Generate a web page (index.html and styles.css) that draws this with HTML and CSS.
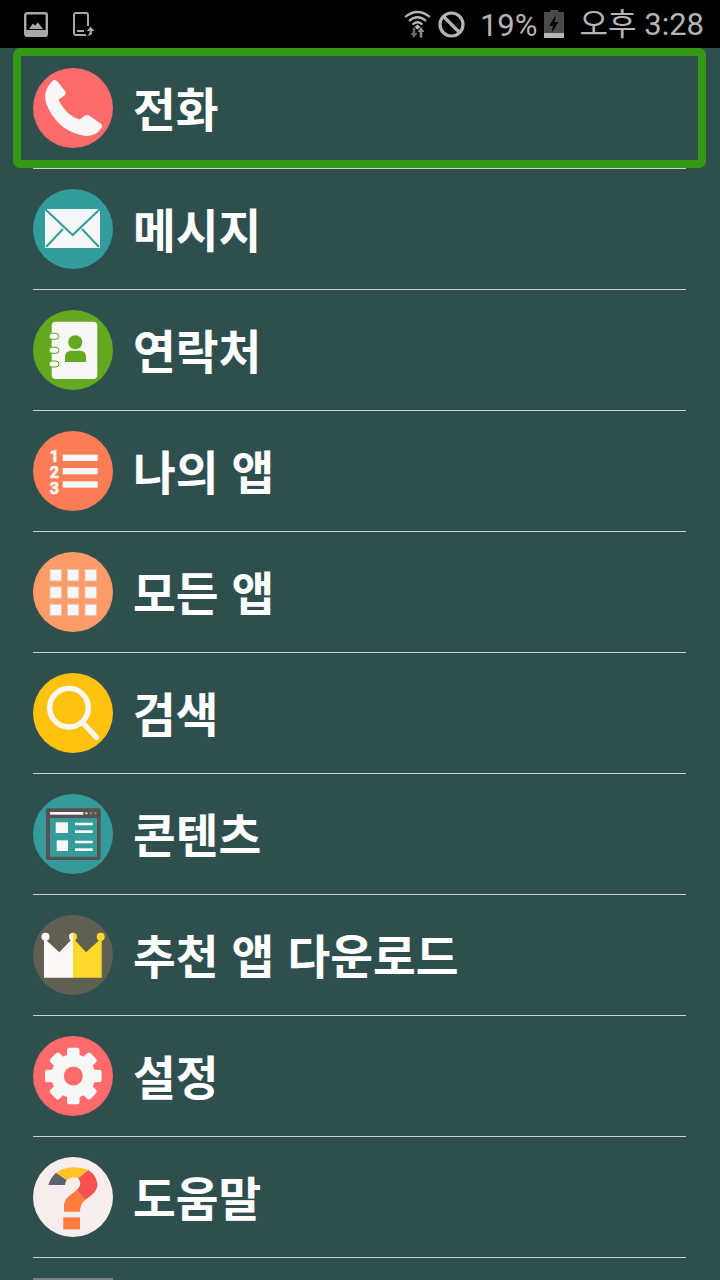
FILE: index.html
```html
<!DOCTYPE html>
<html lang="ko">
<head>
    <meta charset="UTF-8">
    <meta name="viewport" content="width=device-width, initial-scale=1.0">
    <title>메뉴</title>
    <link rel="stylesheet" href="styles.css">
</head>
<body>

    <!-- Status Bar -->
    <div class="status-bar">
        <div class="status-left">
            <svg class="status-gallery" viewBox="0 0 24 25">
                <rect x="1.2" y="1.2" width="21.6" height="22.6" rx="2" fill="none" stroke="#a8a8a8" stroke-width="2.4"/>
                <rect x="1" y="18" width="22" height="6.5" fill="#a8a8a8"/>
                <path d="M5 17 L9 11.5 L11 13.5 L14 10.5 L19 17 Z" fill="#a8a8a8"/>
            </svg>
            <svg class="status-device" viewBox="0 0 22 24">
                <rect x="1" y="1" width="14" height="22" rx="2" fill="none" stroke="#a8a8a8" stroke-width="2"/>
                <rect x="4" y="18" width="7" height="2" fill="#a8a8a8"/>
                <rect x="13" y="14" width="9" height="10" fill="#000"/>
                <path d="M17.5 14.5 L21.5 19 L19 19 L19 22 Q17 24 13.5 23.5 Q16.8 22.5 16.8 19 L14 19 Z" fill="#a8a8a8"/>
            </svg>
        </div>
        <div class="status-right">
            <svg class="status-wifi" viewBox="0 0 27 28">
                <path d="M1 7 Q13.5 -3 26 7" fill="none" stroke="#b5b5b5" stroke-width="2.2"/>
                <path d="M5 11 Q13.5 3.5 22 11" fill="none" stroke="#b5b5b5" stroke-width="2.2"/>
                <path d="M8.5 14.5 Q13.5 10 18.5 14.5" fill="none" stroke="#b5b5b5" stroke-width="2.2"/>
                <path d="M10.5 17 L13.5 14.5 L16.5 17 L13.5 19.5 Z" fill="#b5b5b5"/>
                <path d="M10 28 L6.5 23 L8.7 23 L8.7 18 L11.3 18 L11.3 23 L13.5 23 Z" fill="#6a6a6a"/>
                <path d="M17 17 L20.5 22 L18.3 22 L18.3 27.5 L15.7 27.5 L15.7 22 L13.5 22 Z" fill="#8c8c8c"/>
            </svg>
            <svg class="status-block" viewBox="0 0 27 27">
                <circle cx="13.5" cy="13.5" r="11.5" fill="none" stroke="#b5b5b5" stroke-width="3.2"/>
                <path d="M5.5 5.5 L21.5 21.5" stroke="#b5b5b5" stroke-width="3.2"/>
            </svg>
            <span class="status-battery-text">19%</span>
            <svg class="status-battery" viewBox="0 0 20 28">
                <rect x="6" y="0" width="8" height="3" fill="#4a4a4a"/>
                <rect x="0" y="2" width="20" height="21" fill="#4a4a4a"/>
                <rect x="0" y="23" width="20" height="5" fill="#b5b5b5"/>
                <path d="M12 5 L5 16 L9 16 L7.5 23 L14.5 12 L10.5 12 Z" fill="#000"/>
            </svg>
            <span class="status-time">오후 3:28</span>
        </div>
    </div>

    <!-- Menu List -->
    <div class="screen">
    <div class="menu">

        <div class="menu-row">
            <svg class="menu-icon" viewBox="0 0 80 80">
                <circle cx="40" cy="40" r="40" fill="#ff6b6b"/>
                <path d="M20 12.5 Q22.5 11 24.5 13.5 L32 23 Q33.5 25.5 31.5 27.5 L25.5 31.5 Q28 38 35 45 Q41 50 46.5 51.5 L52 47.5 Q54 46.5 56 47.5 L67.5 55.5 Q70 57.5 68.5 60 Q63 68 53 68 Q42 67 30 59 Q18 49 13.5 36 Q9 23 20 12.5 Z" fill="#f7f7f7"/>
            </svg>
            <span class="menu-label">전화</span>
            <div class="focus-ring"></div>
        </div>

        <div class="menu-row">
            <svg class="menu-icon" viewBox="0 0 80 80">
                <circle cx="40" cy="40" r="40" fill="#339d9d"/>
                <rect x="12" y="20" width="55" height="39" fill="#f7f7f7"/>
                <path d="M12 20 L39.7 46 L67 20 M13 58 L30 40 M66 58 L49 40" fill="none" stroke="#339d9d" stroke-width="2"/>
            </svg>
            <span class="menu-label">메시지</span>
        </div>

        <div class="menu-row">
            <svg class="menu-icon" viewBox="0 0 80 80">
                <circle cx="40" cy="40" r="40" fill="#63a91f"/>
                <rect x="18.7" y="11.7" width="45.6" height="57.3" rx="4" fill="#f7f7f7"/>
                <rect x="16" y="23.3" width="10" height="6" rx="3" fill="#f7f7f7" stroke="#63a91f" stroke-width="1"/>
                <rect x="16" y="37.3" width="10" height="6" rx="3" fill="#f7f7f7" stroke="#63a91f" stroke-width="1"/>
                <rect x="16" y="51" width="10" height="6" rx="3" fill="#f7f7f7" stroke="#63a91f" stroke-width="1"/>
                <circle cx="42.3" cy="32.3" r="7" fill="#63a91f"/>
                <path d="M32 52 L32 47 Q32 40.7 38 40.7 L47 40.7 Q53 40.7 53 47 L53 52 Z" fill="#63a91f"/>
            </svg>
            <span class="menu-label">연락처</span>
        </div>

        <div class="menu-row">
            <svg class="menu-icon" viewBox="0 0 80 80">
                <circle cx="40" cy="40" r="40" fill="#fc7d55"/>
                <text class="list-num"><tspan x="21.3" y="30.5">1</tspan><tspan x="21.3" y="46.5">2</tspan><tspan x="21.3" y="62.7">3</tspan></text>
                <rect x="29.7" y="23.7" width="35" height="6.3" fill="#f7f7f7"/>
                <rect x="29.7" y="37" width="35" height="6.3" fill="#f7f7f7"/>
                <rect x="29.7" y="50.3" width="35" height="6.4" fill="#f7f7f7"/>
            </svg>
            <span class="menu-label">나의 앱</span>
        </div>

        <div class="menu-row">
            <svg class="menu-icon" viewBox="0 0 80 80">
                <circle cx="40" cy="40" r="40" fill="#ff9b66"/>
                <g fill="#f7f7f7" stroke="#e0c6b4" stroke-width="1">
                    <rect x="17" y="17.5" width="11.4" height="11.4"/>
                    <rect x="34.4" y="17.5" width="11.4" height="11.4"/>
                    <rect x="52" y="17.5" width="11.4" height="11.4"/>
                    <rect x="17" y="34.8" width="11.4" height="11.4"/>
                    <rect x="34.4" y="34.8" width="11.4" height="11.4"/>
                    <rect x="52" y="34.8" width="11.4" height="11.4"/>
                    <rect x="17" y="52.2" width="11.4" height="11.4"/>
                    <rect x="34.4" y="52.2" width="11.4" height="11.4"/>
                    <rect x="52" y="52.2" width="11.4" height="11.4"/>
                </g>
            </svg>
            <span class="menu-label">모든 앱</span>
        </div>

        <div class="menu-row">
            <svg class="menu-icon" viewBox="0 0 80 80">
                <circle cx="40" cy="40" r="40" fill="#ffc30f"/>
                <circle cx="36" cy="34.7" r="19.3" fill="none" stroke="#f7f7f7" stroke-width="5.4"/>
                <path d="M50.5 50.5 L63.5 64.5" stroke="#f7f7f7" stroke-width="5.4" stroke-linecap="round"/>
            </svg>
            <span class="menu-label">검색</span>
        </div>

        <div class="menu-row">
            <svg class="menu-icon" viewBox="0 0 80 80">
                <circle cx="40" cy="40" r="40" fill="#339b99"/>
                <rect x="13" y="14.3" width="54.7" height="51.7" rx="2" fill="#555152"/>
                <rect x="17" y="18" width="33.3" height="2.7" fill="#f7f7f7"/>
                <circle cx="53.3" cy="19.3" r="1.3" fill="#f2c14e"/>
                <circle cx="58" cy="19.3" r="1.3" fill="#3fb58f"/>
                <circle cx="62.3" cy="19.3" r="1.3" fill="#e8554e"/>
                <rect x="17" y="24" width="47" height="38.7" fill="#339b99"/>
                <rect x="22.7" y="28.3" width="12.3" height="10.7" fill="#f7f7f7"/>
                <rect x="23.7" y="46.3" width="11.3" height="10.7" fill="#f7f7f7"/>
                <rect x="42" y="28.7" width="17.7" height="2.6" fill="#f7f7f7"/>
                <rect x="42" y="36.3" width="17.7" height="2.7" fill="#f7f7f7"/>
                <rect x="42" y="46.7" width="17.7" height="2.6" fill="#f7f7f7"/>
                <rect x="42" y="54.3" width="17.7" height="2.7" fill="#f7f7f7"/>
            </svg>
            <span class="menu-label">콘텐츠</span>
        </div>

        <div class="menu-row">
            <svg class="menu-icon" viewBox="0 0 80 80">
                <circle cx="40" cy="40" r="40" fill="#5f6052"/>
                <path d="M11 23 L26.3 37.3 L40 23 L40 62.7 L11 62.7 Z" fill="#fdf8f6"/>
                <path d="M40 23 L53 37.3 L68.7 23 L68.7 62.7 L40 62.7 Z" fill="#ffd92a"/>
                <circle cx="12.5" cy="21.7" r="4" fill="#fdf8f6"/>
                <path d="M40 17.7 A4 4 0 0 0 40 25.7 Z" fill="#fdf8f6"/>
                <path d="M40 17.7 A4 4 0 0 1 40 25.7 Z" fill="#ffd92a"/>
                <circle cx="67.7" cy="21.7" r="4" fill="#ffd92a"/>
            </svg>
            <span class="menu-label">추천 앱 다운로드</span>
        </div>

        <div class="menu-row">
            <svg class="menu-icon" viewBox="0 0 80 80">
                <circle cx="40" cy="40" r="40" fill="#ff6b6b"/>
                <g fill="#f7f7f7">
                    <circle cx="40.3" cy="40" r="22"/>
                    <rect x="34" y="11.7" width="12.6" height="56.6" rx="2.5"/>
                    <rect x="34" y="11.7" width="12.6" height="56.6" rx="2.5" transform="rotate(45 40.3 40)"/>
                    <rect x="34" y="11.7" width="12.6" height="56.6" rx="2.5" transform="rotate(90 40.3 40)"/>
                    <rect x="34" y="11.7" width="12.6" height="56.6" rx="2.5" transform="rotate(135 40.3 40)"/>
                </g>
                <circle cx="40.3" cy="40" r="9.5" fill="#ff6b6b"/>
            </svg>
            <span class="menu-label">설정</span>
        </div>

        <div class="menu-row">
            <svg class="menu-icon" viewBox="0 0 80 80">
                <circle cx="40" cy="40" r="40" fill="#f7eded"/>
                <path d="M15.3 28 Q17.5 20.5 23 15.7 L33.7 23 Q32.3 25 32 28 Z" fill="#5a6470"/>
                <path d="M23 15.7 Q38 6.5 55.3 13 L45.3 21.3 Q39 18.5 33.7 23 Z" fill="#ffc328"/>
                <path d="M55.3 13 Q63 18 64.3 26.3 Q65 30 62 34.7 Q58 39 52 43 L43.7 33 Q48.5 28 47 25 Q46.5 22.5 45.3 21.3 Z" fill="#f75050"/>
                <path d="M43.7 33 L52 43 Q47 47 47 54.7 L31 54.7 L31 48 Q31.5 43 35.3 39.7 Z" fill="#fc7d3c"/>
                <rect x="30.3" y="60.3" width="16.7" height="12" fill="#fc7d3c"/>
            </svg>
            <span class="menu-label">도움말</span>
        </div>

        <div class="menu-row">
            <div class="menu-icon menu-icon-next"></div>
        </div>

    </div>
    </div>

</body>
</html>
```
FILE: styles.css
```css
/* General Body Styling */
body {
    margin: 0;
    background-color: #2f4f4f;
    font-family: 'Roboto', 'Noto Sans CJK KR', sans-serif;
}

/* Status Bar */
.status-bar {
    height: 48px;
    background-color: #000;
    display: flex;
    justify-content: space-between;
    align-items: center;
    padding: 0 16px 0 24px;
    color: #b5b5b5;
    font-size: 31px;
}

.status-left, .status-right {
    display: flex;
    align-items: center;
}

.status-gallery {
    width: 24px;
    height: 25px;
}

.status-device {
    width: 22px;
    height: 24px;
    margin-left: 25px;
}

.status-wifi {
    width: 27px;
    height: 28px;
}

.status-block {
    width: 27px;
    height: 27px;
    margin-left: 7px;
}

.status-battery-text {
    margin-left: 15px;
    padding-top: 2px;
}

.status-battery {
    width: 20px;
    height: 28px;
    margin-left: 7px;
}

.status-time {
    margin-left: 15px;
    margin-top: -6px;
}

/* Menu List */
.screen {
    height: 1232px;
    overflow: hidden;
}

.menu {
    margin: 0 34px 0 33px;
}

.menu-row {
    position: relative;
    display: flex;
    align-items: center;
    height: 120px;
    border-bottom: 1px solid #c9d0d0;
}

.menu-icon {
    width: 80px;
    height: 80px;
    flex-shrink: 0;
}

.menu-icon-next {
    background-color: #808080;
}

.menu-label {
    margin-left: 20px;
    margin-top: -3px;
    color: #fff;
    font-size: 46.5px;
    font-weight: 700;
    font-family: 'Noto Sans CJK KR', sans-serif;
}

.list-num {
    fill: #f7f7f7;
    stroke: #f7f7f7;
    stroke-width: 0.7px;
    font-family: 'Roboto', sans-serif;
    font-size: 16px;
    font-weight: 700;
    text-anchor: middle;
}

/* Focus Ring */
.focus-ring {
    position: absolute;
    top: 0;
    left: -20px;
    width: 693px;
    height: 120px;
    box-sizing: border-box;
    border: 8px solid #339915;
    border-radius: 7px;
}
```
